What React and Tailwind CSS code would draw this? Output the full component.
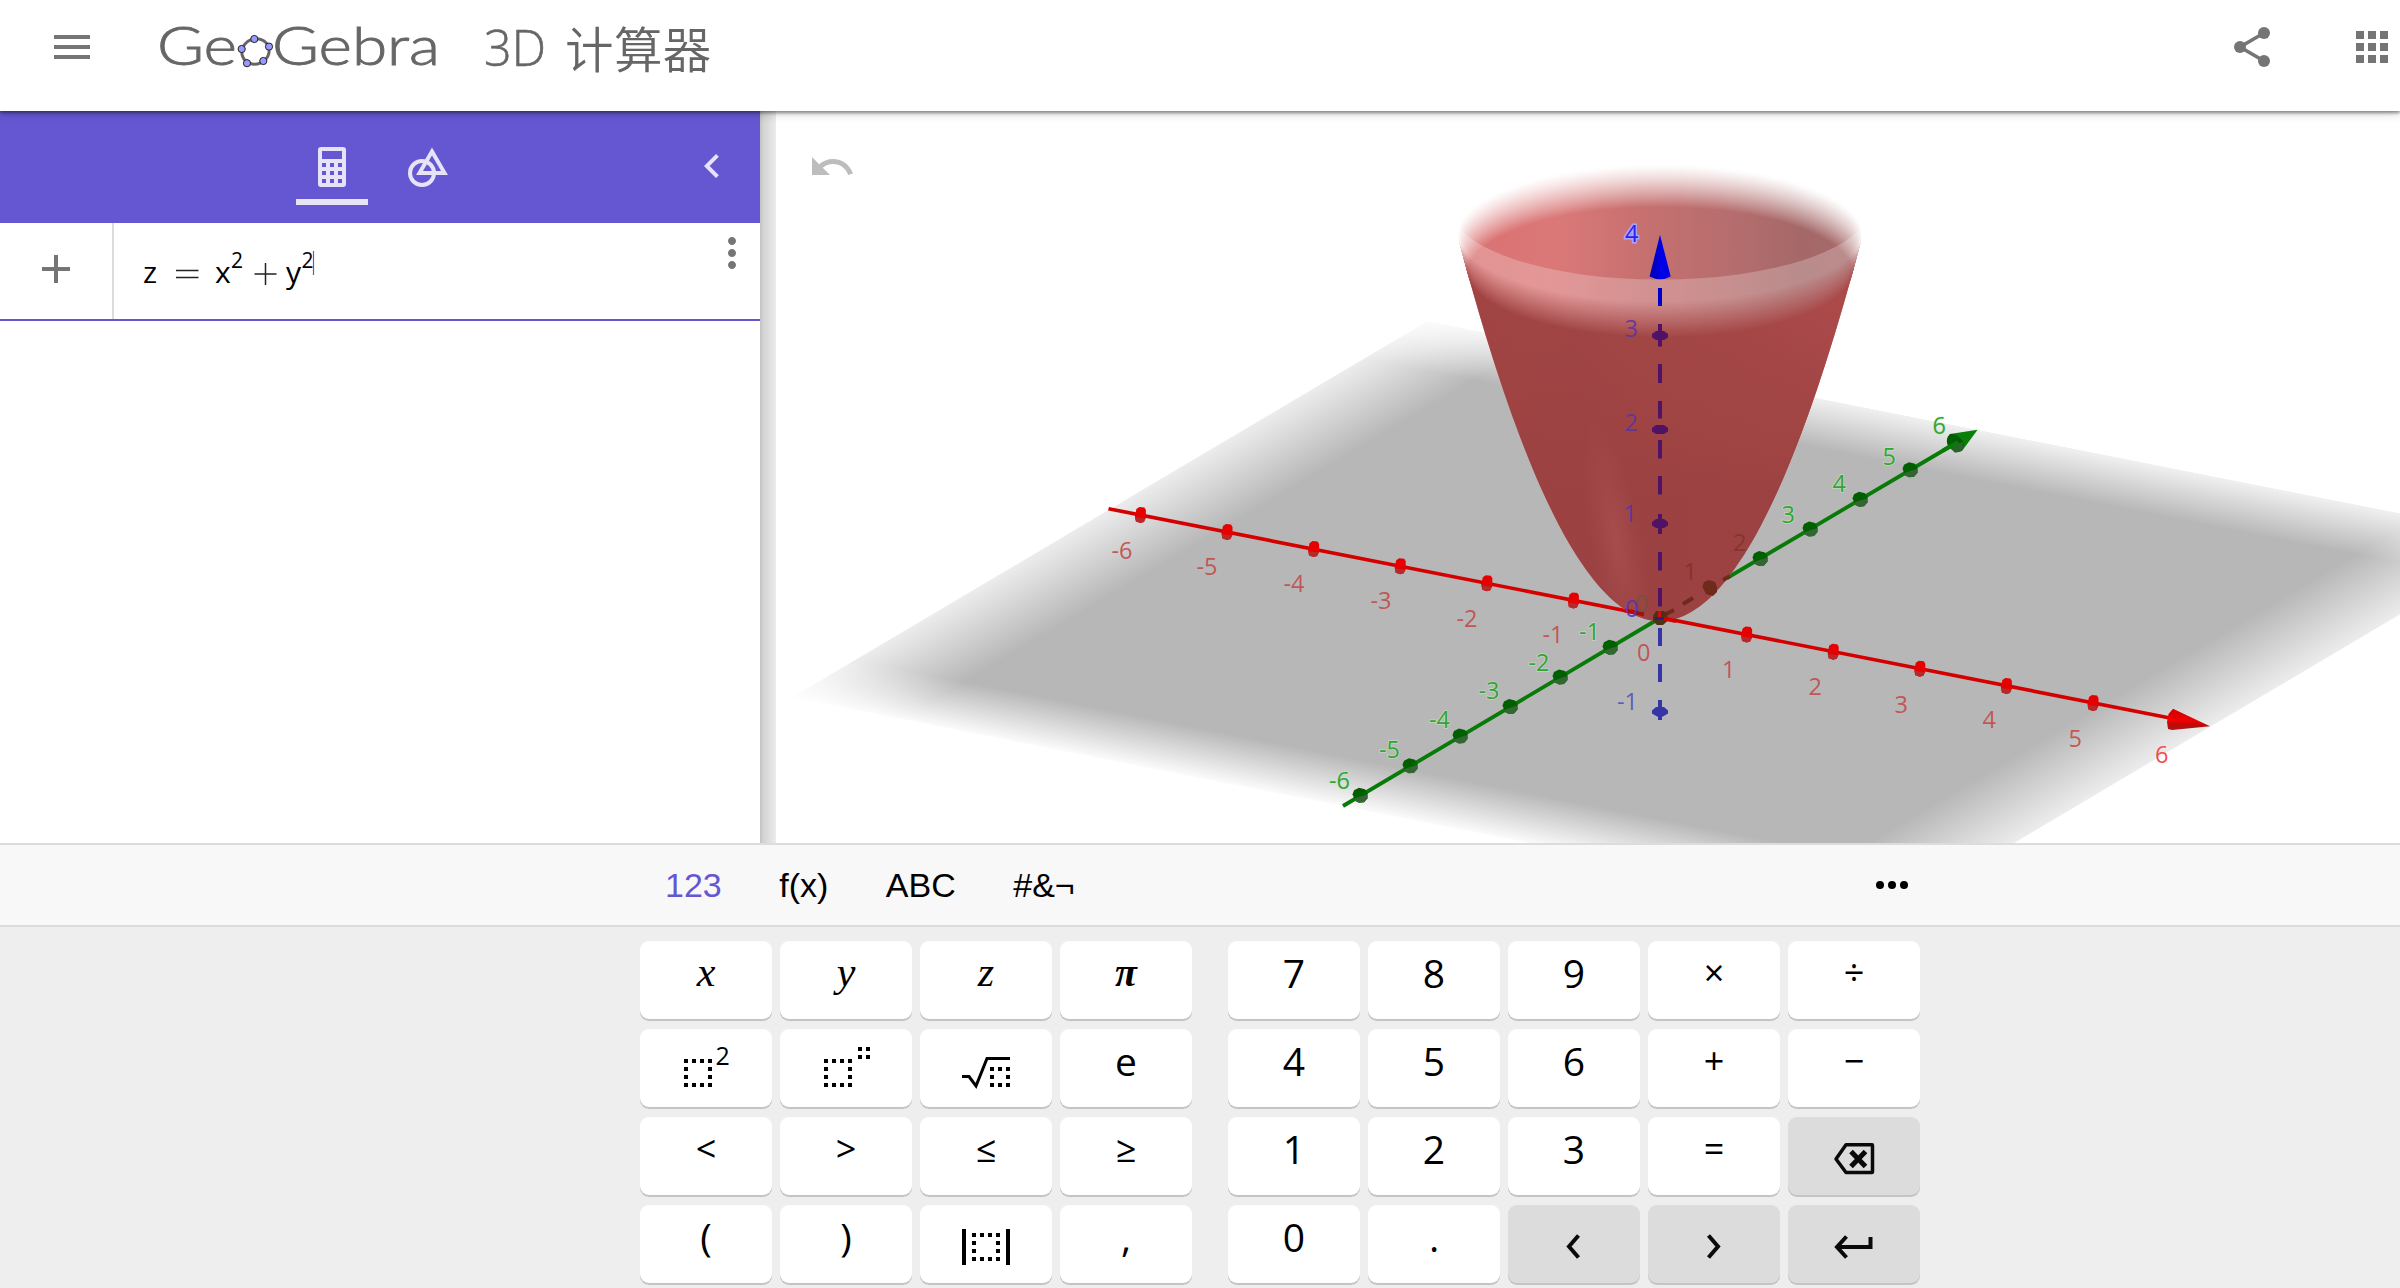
import React from "react";

const SANS = "font-['Open_Sans','Noto_Sans',sans-serif]";

function MIcon({ d, className }) {
  return (
    <svg viewBox="0 0 24 24" className={`w-12 h-12 shrink-0 fill-current ${className || ""}`}>
      <path d={d} />
    </svg>
  );
}

const MENU = "M3 18h18v-2H3v2zm0-5h18v-2H3v2zm0-7v2h18V6H3z";
const SHARE_LINES = "M18 5L6 12l12 7";
const APPS = "M4 8h4V4H4v4zm6 12h4v-4h-4v4zm-6 0h4v-4H4v4zm0-6h4v-4H4v4zm6 0h4v-4h-4v4zm6-10v4h4V4h-4zm-6 4h4V4h-4v4zm6 6h4v-4h-4v4zm0 6h4v-4h-4v4z";
const UNDO = "M12.5 8c-2.65 0-5.05.99-6.9 2.6L2 7v9h9l-3.62-3.62c1.39-1.16 3.16-1.88 5.12-1.88 3.54 0 6.55 2.31 7.6 5.5l2.37-.78C21.08 11.03 17.15 8 12.5 8z";
const PLUS = "M19 13h-6v6h-2v-6H5v-2h6V5h2v6h6v2z";
const CHEVRON = "M15.41 7.41L14 6l-6 6 6 6 1.41-1.41L10.83 12z";
const MORE_V = "M12 8c1.1 0 2-.9 2-2s-.9-2-2-2-2 .9-2 2 .9 2 2 2zm0 2c-1.1 0-2 .9-2 2s.9 2 2 2 2-.9 2-2-.9-2-2-2zm0 6c-1.1 0-2 .9-2 2s.9 2 2 2 2-.9 2-2-.9-2-2-2z";

function Logo() {
  const pts = [[254.3, 39], [269, 46.6], [263.3, 61], [247, 63.2], [241.7, 49]];
  return (
    <svg viewBox="148 0 300 96" className="h-24 w-[300px] overflow-visible">
      <g fill="#666" stroke="#666" strokeWidth="0.9" fontFamily="Lato, 'Open Sans', sans-serif" fontWeight="300" fontSize="54">
        <text x="157" y="64.500" textLength="80" lengthAdjust="spacingAndGlyphs">Ge</text>
        <text x="272" y="64.500" textLength="168" lengthAdjust="spacingAndGlyphs">Gebra</text>
      </g>
      <ellipse cx="255.500" cy="51.500" rx="13.800" ry="12.500" fill="none" stroke="#666" strokeWidth="3" transform="rotate(-22 255.5 51.5)" />
      {pts.map(([x, y]) => (
        <circle key={x} cx={x} cy={y} r="3.600" fill="#9999ff" stroke="#222" strokeWidth="1" />
      ))}
    </svg>
  );
}

function Header() {
  return (
    <header className="relative z-10 flex h-[111px] items-start bg-white pl-12 pt-[23px] pr-1 text-[#757575] shadow-[0_2px_3px_rgba(0,0,0,0.4),0_2px_10px_rgba(0,0,0,0.2)]">
      <MIcon d={MENU} />
      <div className="-mt-[23px] ml-[52px]"><Logo /></div>
      <div className="-mt-[11px] ml-[36px] flex h-[72px] items-center whitespace-nowrap text-[#666]">
        <span className="w-[81px] text-[50px] font-light font-['Open_Sans','Noto_Sans',sans-serif]">
          <span className="relative -top-[1px] inline-block origin-left scale-x-[0.97] [-webkit-text-stroke:0.6px_#666]">3D</span>
        </span>
        <span className="relative -top-[1px] text-[48.500px] font-[350] tracking-[0.4px] font-['Noto_Sans_CJK_SC',sans-serif]">计算器</span>
      </div>
      <div className="ml-auto flex gap-[72px]">
        <svg viewBox="0 0 24 24" className="h-12 w-12">
          <path d={SHARE_LINES} fill="none" stroke="currentColor" strokeWidth="1.8" />
          <circle cx="18" cy="5" r="3" fill="currentColor" />
          <circle cx="6" cy="12" r="3" fill="currentColor" />
          <circle cx="18" cy="19" r="3" fill="currentColor" />
        </svg>
        <MIcon d={APPS} />
      </div>
    </header>
  );
}

function Sidebar() {
  return (
    <aside className="flex w-[760px] shrink-0 flex-col bg-white">
      <div className="flex h-[112px] shrink-0 items-start bg-[#6557d2] text-[#e6e3f6]">
        <div className="ml-[296px] flex h-[94px] w-[72px] flex-col items-center justify-between border-b-[6px] border-[#e6e3f6] pt-9">
          <svg viewBox="0 0 28 40" className="h-10 w-7">
            <path fill="currentColor" fillRule="evenodd" d="M3 0h22a3 3 0 0 1 3 3v34a3 3 0 0 1-3 3H3a3 3 0 0 1-3-3V3a3 3 0 0 1 3-3zM4 4v8h20V4zM4 16v4h4v-4zM12 16v4h4v-4zM20 16v4h4v-4zM4 24v4h4v-4zM12 24v4h4v-4zM20 24v4h4v-4zM4 32v4h4v-4zM12 32v4h4v-4zM20 32v4h4v-4z" />
          </svg>
        </div>
        <svg viewBox="0 0 40 40" className="ml-10 mt-9 h-10 w-10" fill="none" stroke="currentColor" strokeWidth="4">
          <circle cx="14" cy="26" r="12" />
          <path d="M24 4.500L11.500 26h25z" />
        </svg>
        <MIcon d={CHEVRON} className="ml-auto mr-6 mt-[31px]" />
      </div>
      <div className="flex h-[98px] shrink-0 border-b-2 border-[#6557d2]">
        <div className="flex w-[114px] justify-center border-r-2 border-[#dcdcdc] pt-[22px] text-[#757575]">
          <MIcon d={PLUS} />
        </div>
        <svg viewBox="114 223 594 96" className="h-24 w-[594px]" fontFamily="'Open Sans','Noto Sans',sans-serif" fontSize="30">
          <text x="143" y="283">z</text>
          <path d="M176 270.500h22.500M176 277.500h22.500M254.500 274h22M265.500 263v22" stroke="#222" strokeWidth="1.500" />
          <text x="215" y="283">x</text>
          <text x="231" y="268" fontSize="21">2</text>
          <text x="286" y="283">y</text>
          <text x="301.500" y="268" fontSize="21">2</text>
          <path d="M313.500 251v24" stroke="#6557d2" strokeWidth="1.200" />
        </svg>
        <MIcon d={MORE_V} className="mt-[6px] text-[#757575]" />
      </div>
    </aside>
  );
}

/* ---------- 3D scene geometry ---------- */
const OX = 1660;
const OY = 618;
const ring = (z) => {
  const s = Math.sqrt(z);
  return { cx: OX, cy: OY - 94 * z, rx: 100 * s, ry: 34.2 * s };
};
const parabola = (lim) => {
  const p = [];
  for (let i = -60; i <= 60; i++) {
    const X = (lim * i) / 60;
    p.push(`${(OX + 100 * X).toFixed(1)},${(621.1 - 94 * X * X).toFixed(1)}`);
  }
  return p.join(" ");
};
const FADE = Array.from({ length: 41 }, (_, i) => i / 40);
const grey = (v) => {
  const n = Math.round(255 * v);
  return `rgb(${n},${n},${n})`;
};

const RED_LABELS = [
  ["-6", 1132.5, 558.5], ["-5", 1217.5, 574.5], ["-4", 1304.5, 591.5], ["-3", 1391.5, 608.5], ["-2", 1477.5, 626.5], ["-1", 1563.5, 642.5],
  ["0", 1650.5, 660.5], ["1", 1735.5, 678], ["2", 1822, 695], ["3", 1908, 712.5], ["4", 1996, 728], ["5", 2082, 746.5],
];
const GREEN_LABELS = [
  ["-6", 1350, 788.5], ["-5", 1400, 758], ["-4", 1450, 727.5], ["-3", 1499.5, 698.5], ["-2", 1549.5, 670.5], ["-1", 1600, 640],
  ["3", 1795, 522.5], ["4", 1846, 491.5], ["5", 1896, 464.5], ["6", 1946, 434],
];

function RedTick({ k }) {
  return (
    <g transform={`translate(${OX + 86.6 * k} ${OY + 17.1 * k - 0.5})`}>
      <path d="M-5.500 1L-4-6L-1-8L4-7.500L5.500-5V3L3.500 7L0 8L-4.500 6.500z" fill="#e60000" />
      <path d="M-5.500 2L5 3.500L3.500 7L0 8L-4.500 6.500z" fill="#b52a2a" />
    </g>
  );
}
function GreenTick({ k }) {
  return (
    <g transform={`translate(${OX + 50 * k} ${OY - 29.6 * k - 0.3})`}>
      <path d="M-7.500-1L-6-5L-1-7.500L5-6L7.500-2V3L4 7L-1 7.500L-5 5.500z" fill="#006000" />
      <path d="M-6 3.500L1 1L7.500-1V3L4 7L-1 7.500L-5 5.500z" fill="#336633" />
    </g>
  );
}

function Graphics() {
  const back = ring(4.36);
  return (
    <svg viewBox="776 111 1624 732" className="block h-[732px] w-[1624px] bg-white">
      <defs>
        <linearGradient id="fx">
          <stop offset="0" stopColor="#fff" stopOpacity="0.26" />
          <stop offset="0.1" stopColor="#fff" stopOpacity="1" />
          <stop offset="0.9" stopColor="#fff" stopOpacity="1" />
          <stop offset="1" stopColor="#fff" stopOpacity="0.26" />
        </linearGradient>
        {/* v runs from the near edge (0) to the far edge (1) */}
        <linearGradient id="fy" x1="0" y1="0" x2="0" y2="1">
          <stop offset="0" stopColor="#b7b7b7" stopOpacity="0.05" />
          <stop offset="0.1" stopColor="#b7b7b7" stopOpacity="1" />
          <stop offset="0.9" stopColor="#b7b7b7" stopOpacity="1" />
          <stop offset="1" stopColor="#b7b7b7" stopOpacity="0.2" />
        </linearGradient>
        <mask id="planeMask" maskUnits="userSpaceOnUse" x="-1" y="-1" width="2" height="2">
          <rect x="-1" y="-1" width="2" height="2" fill="url(#fx)" />
        </mask>
        <linearGradient id="inner" gradientUnits="userSpaceOnUse" x1="1459" y1="0" x2="1861" y2="0">
          <stop offset="0" stopColor="#db7272" />
          <stop offset="0.25" stopColor="#da7878" />
          <stop offset="0.45" stopColor="#c77070" />
          <stop offset="0.65" stopColor="#b86e6e" />
          <stop offset="0.85" stopColor="#a56868" />
          <stop offset="1" stopColor="#a86a6a" />
        </linearGradient>
        <linearGradient id="outer" gradientUnits="userSpaceOnUse" x1="1470" y1="300" x2="1850" y2="300">
          <stop offset="0" stopColor="#a24343" />
          <stop offset="0.28" stopColor="#a04545" />
          <stop offset="0.5" stopColor="#a44646" />
          <stop offset="1" stopColor="#ac4a4a" />
        </linearGradient>
        <linearGradient id="outerDark" gradientUnits="userSpaceOnUse" x1="0" y1="300" x2="0" y2="500">
          <stop offset="0" stopColor="#9b4141" stopOpacity="0" />
          <stop offset="1" stopColor="#9b4141" stopOpacity="0.9" />
        </linearGradient>
        <radialGradient id="shine" gradientUnits="userSpaceOnUse" cx="0" cy="0" r="1" gradientTransform="translate(1616 540) rotate(-10) scale(26 125)">
          <stop offset="0" stopColor="#a64d4d" />
          <stop offset="1" stopColor="#a34a4a" stopOpacity="0" />
        </radialGradient>
        <mask id="backMask" maskUnits="userSpaceOnUse" x="1400" y="100" width="520" height="560">
          {FADE.map((t) => (
            <ellipse key={t} {...ring(4.1 - 0.42 * t)} fill={grey(Math.pow(t, 1.25))} />
          ))}
          <polygon points={parabola(1.91)} fill="#fff" />
        </mask>
        <mask id="frontMask" maskUnits="userSpaceOnUse" x="1400" y="100" width="520" height="560">
          <polygon points={parabola(2.01)} fill="#fff" />
          {FADE.map((t) => (
            <ellipse key={t} {...ring(3.68 + 0.42 * t)} fill={grey(1 - t)} />
          ))}
        </mask>
        <mask id="lipMask" maskUnits="userSpaceOnUse" x="1400" y="100" width="520" height="560">
          <rect x="1400" y="200" width="520" height="200" fill="#fff" />
          <ellipse {...back} fill="#000" />
          <rect x="1400" y="100" width="520" height="108" fill="#000" />
        </mask>
        <linearGradient id="coneZ" x1="0" x2="1">
          <stop offset="0" stopColor="#0000aa" />
          <stop offset="0.6" stopColor="#0000ee" />
          <stop offset="1" stopColor="#0000d8" />
        </linearGradient>
        <linearGradient id="coneX" x1="0" y1="0" x2="0" y2="1">
          <stop offset="0" stopColor="#d00000" />
          <stop offset="0.55" stopColor="#f00000" />
          <stop offset="0.75" stopColor="#c00808" />
          <stop offset="1" stopColor="#aa1818" />
        </linearGradient>
      </defs>

      {/* xy plane; the second basis vector points towards the viewer-far side */}
      <g transform="matrix(550.8 108.8 318 -188.3 1660 618)">
        <g mask="url(#planeMask)">
          <rect x="-1" y="-1" width="2" height="2" fill="url(#fy)" />
        </g>
      </g>

      {/* axes behind the surface */}
      <path d="M1108.500 508.700L2175 719" stroke="#d40000" strokeWidth="3.600" />
      <path d="M1343 806L1660 618M1727 578L1956 443" stroke="#077a07" strokeWidth="3.800" fill="none" />

      {/* paraboloid */}
      <g mask="url(#backMask)">
        <rect x="1400" y="100" width="520" height="560" fill="url(#inner)" />
        <rect x="1400" y="100" width="520" height="300" fill="#fff" opacity="0.23" mask="url(#lipMask)" />
      </g>
      <g mask="url(#frontMask)">
        <rect x="1400" y="100" width="520" height="560" fill="url(#outer)" />
        <rect x="1400" y="300" width="520" height="360" fill="url(#outerDark)" />
        <ellipse cx="1616" cy="540" rx="60" ry="135" fill="url(#shine)" />
      </g>

      {/* axis parts seen through the surface */}
      <path d="M1631 611.500L1644 614.500" stroke="#a01010" strokeWidth="4" />
      <path d="M1625 610.500L1633 612" stroke="#d40000" strokeWidth="4" />
      <path d="M1660 617L1674 610M1683 604L1693 598M1723 580L1730 576" stroke="#6e2a1b" strokeWidth="4" />
      <path d="M1702.500 587L1704 582L1709 580L1715 582L1717 587V592L1713 596L1706 594z" fill="#6e2a1b" />
      <path d="M1660 288v18" stroke="#0000cc" strokeWidth="4" />
      <path d="M1660 324v22.500M1660 364v19M1660 401v17.500M1660 440v18.500M1660 476v18.500M1660 514v20M1660 552v18.500M1660 588v18.500" stroke="#501266" strokeWidth="4" />
      <path d="M1660 628v18M1660 664v18M1660 700v20" stroke="#3535a8" strokeWidth="4" />
      {[335.5, 429.5, 523.5].map((y) => (
        <path key={y} d={`M1652 ${y - 1.5}L1656 ${y - 4.5}H1664L1668 ${y - 1.5}V${y + 2}L1664 ${y + 4.5}H1656L1652 ${y + 2}z`} fill="#501266" />
      ))}
      <path d="M1652 710.500L1656 707H1664L1668 710.500V713.500L1663 716.500H1657L1652 713.500z" fill="#3535a8" />
      <path d="M1660 234.700L1649.600 276.500Q1660 282 1670.700 276.500z" fill="url(#coneZ)" />

      {[-6, -5, -4, -3, -2, -1, 1, 2, 3, 4, 5].map((k) => <RedTick key={k} k={k} />)}
      {[-6, -5, -4, -3, -2, -1, 2, 3, 4, 5].map((k) => <GreenTick key={k} k={k} />)}
      {/* origin */}
      <path d="M1653 616L1656 611H1664L1667.500 615V621L1663 625H1657L1653 621z" fill="#4a3414" />
      <path d="M1658 611h3v7h-3z" fill="#d01010" />
      <path d="M1655 617h11v3h-11z" fill="#3a1a80" />
      <path d="M1664 618.500L1676 621" stroke="#d40000" strokeWidth="4" />

      <path d="M2167 722L2168.500 714L2173 708.700L2210 726.300L2172 730L2168 729z" fill="url(#coneX)" />
      <path d="M1977.600 429.700L1950 434Q1944 441 1950 446L1957 452.500L1962 451z" fill="#088008" />
      <path d="M1950 434Q1945 439 1948 446L1955 452.500L1961 451Q1966 445 1962 440Q1957 433 1950 434z" fill="#005c00" />
      <path d="M1948 446L1955 452.500L1961 451Q1964 447 1963 442z" fill="#2c632c" />
      <path d="M1943 450.500L1958 442" stroke="#077a07" strokeWidth="3.800" />

      <g fontFamily="'Open Sans','Noto Sans',sans-serif" fontSize="23.500" textAnchor="end">
        <g fill="#c24c4c" fillOpacity="0.92">
          {RED_LABELS.map(([t, x, y]) => <text key={t} x={x} y={y}>{t}</text>)}
          <text x="2168.500" y="762.500" fill="#f53b3b">6</text>
        </g>
        <g fill="#35a335" stroke="#c8ecc8" strokeOpacity="0.6" strokeWidth="1.600">
          {GREEN_LABELS.map(([t, x, y]) => <text key={t} x={x} y={y} style={{ paintOrder: "stroke" }}>{t}</text>)}
        </g>
        <g fill="#83362c">
          <text x="1697" y="580">1</text>
          <text x="1746.500" y="550.500">2</text>
          <text x="1648.500" y="611.500" fill="#7a5040">0</text>
        </g>
        <g fill="#5c35a0" fillOpacity="0.9">
          <text x="1638" y="336.500">3</text>
          <text x="1638" y="430.500">2</text>
          <text x="1637" y="521.500">1</text>
          <text x="1638.500" y="616.500" fill="#4c35c8">0</text>
          <text x="1638" y="709.500" fill="#5252bb">-1</text>
        </g>
        <text x="1638.500" y="241.500" fill="#2a22ee" stroke="#a9a4ff" strokeWidth="3" style={{ paintOrder: "stroke" }}>4</text>
      </g>
    </svg>
  );
}

/* ---------- keyboard ---------- */
function Dots({ xs, ys, border }) {
  const out = [];
  xs.forEach((x, i) => ys.forEach((y, j) => {
    const edge = i === 0 || j === 0 || i === xs.length - 1 || j === ys.length - 1;
    if (edge || !border) out.push(<rect key={`${x}-${y}`} x={x} y={y} width="4" height="4" />);
  }));
  return out;
}

function KeySvg({ children }) {
  return <svg viewBox="0 0 132 78" className="h-[78px] w-[132px]" fontFamily="'Open Sans','Noto Sans',sans-serif">{children}</svg>;
}

const B = [0, 8, 16, 24];
const SquareKey = () => (
  <KeySvg>
    <Dots border xs={B.map((v) => v + 44)} ys={B.map((v) => v + 30)} />
    <text x="75.500" y="35.500" fontSize="25">2</text>
  </KeySvg>
);
const PowerKey = () => (
  <KeySvg>
    <Dots border xs={B.map((v) => v + 44)} ys={B.map((v) => v + 30)} />
    <Dots xs={[78, 86]} ys={[18, 26]} />
  </KeySvg>
);
const RootKey = () => (
  <KeySvg>
    <path d="M42 47.500H49L56 57L67 29.500H90" fill="none" stroke="#000" strokeWidth="3" />
    <Dots border xs={[70, 78, 86]} ys={[38, 46, 54]} />
  </KeySvg>
);
const AbsKey = () => (
  <KeySvg>
    <path d="M42 24h4v36h-4zM86 24h4v36h-4z" />
    <Dots border xs={B.map((v) => v + 52)} ys={B.map((v) => v + 28)} />
  </KeySvg>
);
const line = { fill: "none", stroke: "#0a0a0a", strokeWidth: 4 };
const BackspaceKey = () => (
  <KeySvg>
    <path {...line} strokeWidth="3.500" strokeLinejoin="round" d="M58 27.800H84Q84.500 27.800 84.500 28.500V54.500Q84.500 55.500 84 55.500H58L48 42z" />
    <path {...line} d="M63 34.500L77.500 49.500M77.500 34.500L63 49.500" strokeWidth="5" />
  </KeySvg>
);
const LeftKey = () => <KeySvg><path {...line} d="M70.500 30.500L61 41.500L70.500 52.500" /></KeySvg>;
const RightKey = () => <KeySvg><path {...line} d="M60.500 30.500L70 41.500L60.500 52.500" /></KeySvg>;
const EnterKey = () => <KeySvg><path {...line} d="M82.500 32V42H49M58.500 31.500L49 42L58.500 52.500" /></KeySvg>;

const SERIF = "text-[42px] italic font-['Liberation_Serif',serif]";
const SERIF_BOLD = "text-[40px] italic font-bold font-['Liberation_Serif',serif]";
const LEFT = [
  ["x", SERIF], ["y", SERIF], ["z", SERIF], ["π", SERIF_BOLD],
  [<SquareKey />], [<PowerKey />], [<RootKey />], ["e"],
  ["<", "op"], [">", "op"], ["≤", "op"], ["≥", "op"],
  ["("], [")"], [<AbsKey />], [","],
];
const RIGHT = [
  ["7"], ["8"], ["9"], ["×", "op"], ["÷", "op"],
  ["4"], ["5"], ["6"], ["+", "op"], ["−", "op"],
  ["1"], ["2"], ["3"], ["=", "op"], [<BackspaceKey />, "fn"],
  ["0"], ["."], [<LeftKey />, "fn"], [<RightKey />, "fn"], [<EnterKey />, "fn"],
];

function Key({ label, kind }) {
  const fn = kind === "fn";
  const size = kind === "op" ? "text-[36px]" : "text-[39px]";
  const face = kind === SERIF || kind === SERIF_BOLD ? kind : `${size} ${SANS}`;
  return (
    <button className={`flex h-[78px] w-[132px] items-start justify-center rounded-[9px] ${fn ? "bg-[#dcdcdc]" : "bg-white"} shadow-[0_2px_0_#c4c4c4]`}>
      {typeof label === "string"
        ? <span className={`block h-[63px] leading-[63px] ${face}`}>{label}</span>
        : label}
    </button>
  );
}

function Keyboard() {
  return (
    <section className="flex h-[445px] flex-col border-t-2 border-[#dcdcdc] bg-[#eeeeee] text-black">
      <div className="flex h-[82px] shrink-0 items-center border-b-2 border-[#dcdcdc] bg-[#f8f8f8] pl-[665px] pr-[480px] font-['Liberation_Sans',Arial,sans-serif] text-[34px]">
        <div className="flex gap-[57.500px]">
          <span className="text-[#6557d2]">123</span>
          <span>f(x)</span>
          <span>ABC</span>
          <span>#&amp;¬</span>
        </div>
        <svg viewBox="0 0 48 48" className="ml-auto h-12 w-12">
          <circle cx="8" cy="24" r="4" /><circle cx="20" cy="24" r="4" /><circle cx="32" cy="24" r="4" />
        </svg>
      </div>
      <div className="flex gap-9 pl-[640px] pt-[14px]">
        <div className="grid grid-cols-4 gap-x-2 gap-y-[10px]">
          {LEFT.map(([l, k], i) => <Key key={i} label={l} kind={k} />)}
        </div>
        <div className="grid grid-cols-5 gap-x-2 gap-y-[10px]">
          {RIGHT.map(([l, k], i) => <Key key={i} label={l} kind={k} />)}
        </div>
      </div>
    </section>
  );
}

export default function App() {
  return (
    <div className="flex h-[1288px] w-[2400px] flex-col overflow-hidden bg-white">
      <Header />
      <main className="flex h-[732px] shrink-0">
        <Sidebar />
        <div className="w-4 shrink-0 border-l-2 border-[#c6c6c6] bg-gradient-to-r from-[#d0d0d0] to-[#ececec]" />
        <div className="relative">
          <Graphics />
          <MIcon d={UNDO} className="absolute left-8 top-8 text-[#bdbdbd]" />
        </div>
      </main>
      <Keyboard />
    </div>
  );
}
